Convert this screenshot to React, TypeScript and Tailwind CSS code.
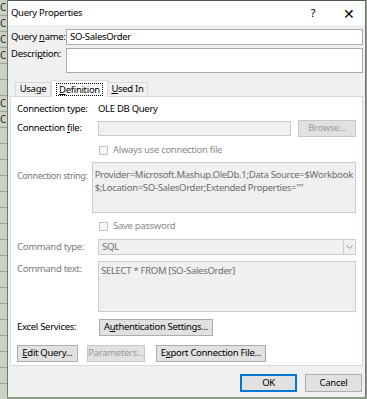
import React from "react";

const font = { fontFamily: '"Noto Sans", "Open Sans", sans-serif' };

function U({ children }: { children: React.ReactNode }) {
  return <span className="underline underline-offset-[1px]">{children}</span>;
}

function Checkbox({ label }: { label: string }) {
  return (
    <div className="flex items-center gap-[5px] text-[#8a8a8a]">
      <span className="h-[9px] w-[9px] border border-[#c4c4c4] bg-[#f7f7f7]" />
      <span>{label}</span>
    </div>
  );
}

function Btn({
  children,
  disabled,
  className = "",
}: {
  children: React.ReactNode;
  disabled?: boolean;
  className?: string;
}) {
  return (
    <div
      className={`flex h-[17px] items-center justify-center border bg-[#e1e1e1] ${
        disabled ? "border-[#c8c8c8] text-[#9a9a9a]" : "border-[#adadad] text-black"
      } ${className}`}
    >
      {children}
    </div>
  );
}

function ExcelStrip() {
  const rows = Array.from({ length: 25 });
  return (
    <div className="flex w-[7px] flex-col overflow-hidden bg-[#c9d2c4]">
      {rows.map((_, i) => (
        <div
          key={i}
          className="h-[16px] shrink-0 overflow-hidden border-b border-[#9aa596] text-[10px] leading-[15px] text-[#333]"
        >
          {i < 4 || (i > 5 && i < 8) ? "C" : ""}
        </div>
      ))}
    </div>
  );
}

export default function App() {
  return (
    <div
      className="flex h-[399px] w-[367px] overflow-hidden whitespace-nowrap bg-[#8c9a88] text-[9.5px] tracking-[-0.3px] text-black"
      style={font}
    >
      <ExcelStrip />
      <div className="flex h-[397px] w-[359px] flex-col border-x border-t border-[#6e7a6c] border-t-[#4f5e4d] bg-[#f0f0f0]">
        {/* title bar */}
        <div className="flex h-[24px] items-center bg-white pl-[3px] text-[9.5px]">
          <span className="flex-1">Query Properties</span>
          <span className="w-[16px] text-center text-[11px]">?</span>
          <span className="ml-[20px] mr-[8px] w-[16px] text-center text-[14px] font-light">✕</span>
        </div>

        <div className="flex flex-1 flex-col px-[2px] pt-[4px]">
          <div className="flex h-[16px] items-center">
            <span className="w-[56px] pl-[1px]">
              Query <U>n</U>ame:
            </span>
            <div className="flex h-[16px] flex-1 items-center border border-[#a9a9a9] bg-white pl-[3px]">
              SO-SalesOrder
            </div>
          </div>
          <div className="mt-[3px] flex h-[25px]">
            <span className="w-[56px] pl-[1px] leading-[12px]">
              Descri<U>p</U>tion:
            </span>
            <div className="h-[25px] flex-1 border border-[#a9a9a9] bg-white" />
          </div>

          {/* tabs */}
          <div className="mt-[7px] flex h-[16px] items-end pl-[5px]">
            <div className="flex h-[14px] w-[36px] items-center justify-center border border-b-0 border-[#d9d9d9]">
              Usa<U>g</U>e
            </div>
            <div className="relative -mb-px flex h-[17px] w-[57px] items-center justify-center border border-b-0 border-[#d9d9d9] bg-white">
              <span className="border border-dotted border-black px-[2px] leading-[11px]">
                <U>D</U>efinition
              </span>
            </div>
            <div className="flex h-[14px] w-[40px] items-center justify-center border border-b-0 border-l-0 border-[#d9d9d9]">
              <U>U</U>sed In
            </div>
          </div>

          {/* panel */}
          <div className="flex h-[270px] flex-col border border-[#d9d9d9] bg-white px-[6px]">
            <div className="mt-[6px] flex h-[12px] items-center">
              <span className="w-[81px]">Connection type:</span>
              <span>OLE DB Query</span>
            </div>
            <div className="mt-[5px] flex h-[17px] items-center">
              <span className="w-[81px]">
                Connection <U>f</U>ile:
              </span>
              <div className="h-[15px] w-[194px] border border-[#cccccc] bg-[#f0f0f0]" />
              <Btn disabled className="ml-[7px] w-[58px]">
                Browse...
              </Btn>
            </div>
            <div className="mt-[7px] flex h-[12px] items-center pl-[82px]">
              <Checkbox label="Always use connection file" />
            </div>
            <div className="mt-[6px] flex h-[51px]">
              <span className="w-[81px] pt-[8px] text-[9px] leading-[12px] tracking-[-0.4px] text-[#7a7a7a]">
                Connection string:
              </span>
              <div className="flex-1 border border-[#cccccc] bg-[#f0f0f0] px-[2px] pt-[5px] leading-[13px] text-[#6d6d6d]">
                Provider=Microsoft.Mashup.OleDb.1;Data Source=$Workbook
                <br />
                $;Location=SO-SalesOrder;Extended Properties=""
              </div>
            </div>
            <div className="mt-[7px] flex h-[12px] items-center pl-[82px]">
              <Checkbox label="Save password" />
            </div>
            <div className="mt-[7px] flex h-[16px] items-center">
              <span className="w-[81px] text-[#7a7a7a]">Command type:</span>
              <div className="flex h-[16px] flex-1 items-center border border-[#cccccc] bg-[#f0f0f0] pl-[3px] text-[#6d6d6d]">
                <span className="flex-1">SQL</span>
                <span className="flex h-[14px] w-[12px] items-center justify-center border-l border-[#cccccc]">
                  <svg width="7" height="4" viewBox="0 0 7 4">
                    <path d="M0.5 0.5 L3.5 3.5 L6.5 0.5" fill="none" stroke="#8a8a8a" strokeWidth="1" />
                  </svg>
                </span>
              </div>
            </div>
            <div className="mt-[6px] flex h-[51px]">
              <span className="w-[81px] pt-[1px] text-[#7a7a7a]">Command text:</span>
              <div className="flex-1 border border-[#cccccc] bg-[#f0f0f0] px-[2px] pt-[2px] text-[#6d6d6d]">
                SELECT * FROM [SO-SalesOrder]
              </div>
            </div>
            <div className="mt-[7px] flex h-[17px] items-center">
              <span className="w-[82px]">Excel Services:</span>
              <Btn className="w-[114px]">
                A<U>u</U>thentication Settings...
              </Btn>
            </div>
            <div className="mt-[9px] flex h-[17px] items-center">
              <Btn className="w-[61px]">
                <U>E</U>dit Query...
              </Btn>
              <Btn disabled className="ml-[9px] w-[58px]">
                Parameters...
              </Btn>
              <Btn className="ml-[11px] w-[110px]">
                E<U>x</U>port Connection File...
              </Btn>
            </div>
          </div>

          {/* footer */}
          <div className="mt-[8px] flex justify-end gap-[8px] pr-[1px]">
            <div className="flex h-[18px] w-[57px] items-center justify-center border-2 border-[#0078d7] bg-[#e1e1e1]">
              OK
            </div>
            <div className="flex h-[18px] w-[57px] items-center justify-center border border-[#adadad] bg-[#e1e1e1]">
              Cancel
            </div>
          </div>
        </div>
      </div>
    </div>
  );
}
